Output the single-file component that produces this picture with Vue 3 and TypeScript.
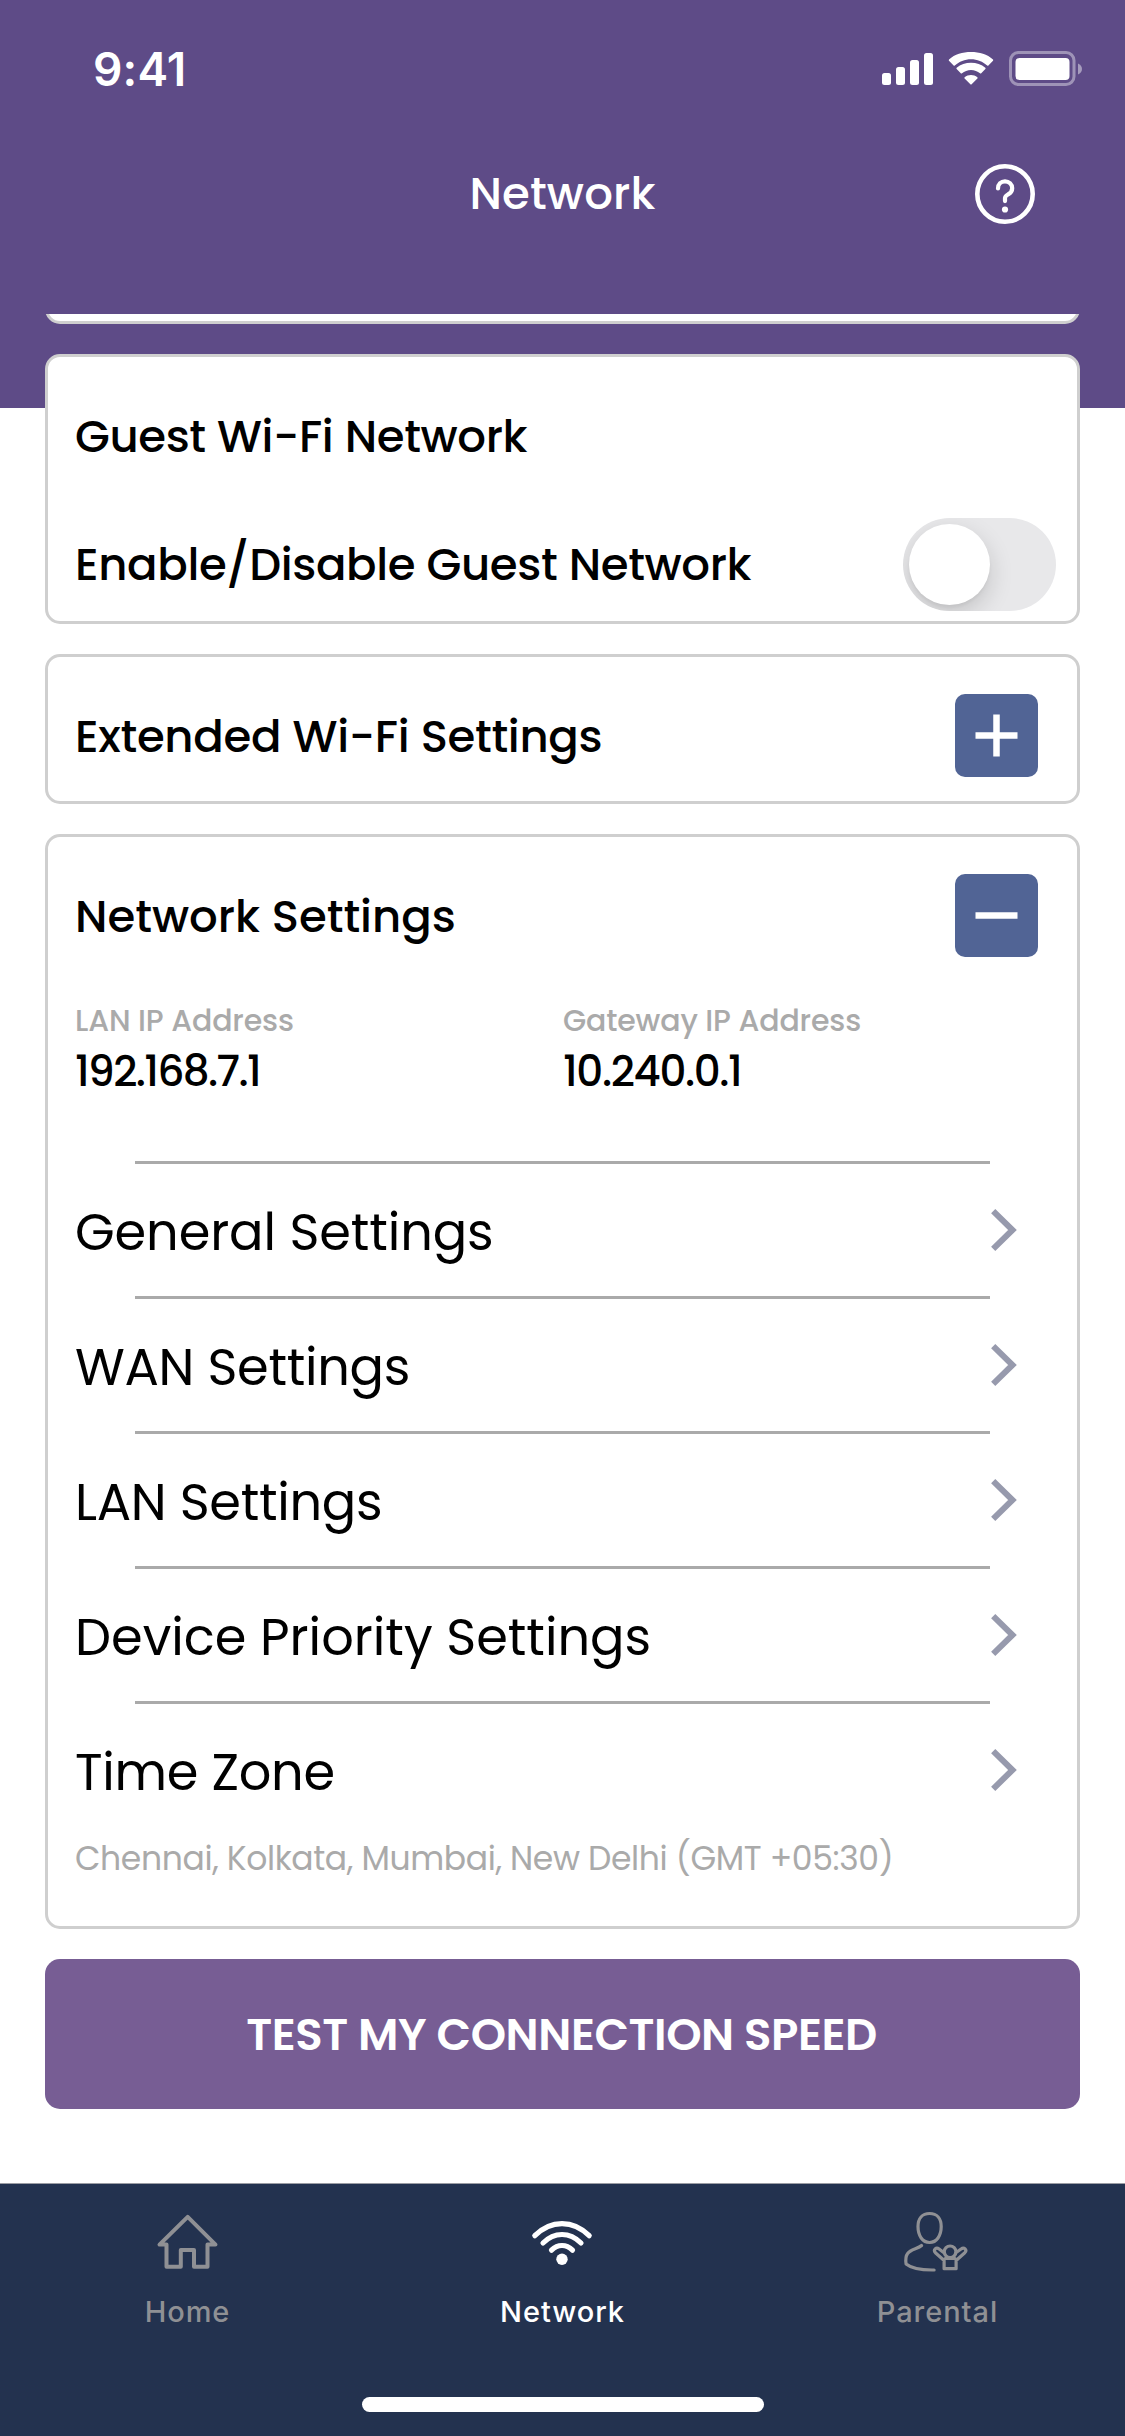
<script setup lang="ts">
import { ref } from 'vue'

interface SettingsRow {
  key: string
  label: string
}

interface Tab {
  key: string
  label: string
}

const rows: SettingsRow[] = [
  { key: 'general', label: 'General Settings' },
  { key: 'wan', label: 'WAN Settings' },
  { key: 'lan', label: 'LAN Settings' },
  { key: 'priority', label: 'Device Priority Settings' },
  { key: 'zone', label: 'Time Zone' },
]

const tabs: Tab[] = [
  { key: 'home', label: 'Home' },
  { key: 'network', label: 'Network' },
  { key: 'parental', label: 'Parental' },
]

const activeTab = ref('network')
const guestEnabled = ref(false)
</script>

<template>
  <div class="screen">
    <header class="header">
      <div class="status">
        <span class="clock">9:41</span>
        <svg class="status-icons" width="202" height="36" viewBox="0 0 202 36">
          <g fill="#fff">
            <rect x="1" y="22" width="9" height="12" rx="2.5" />
            <rect x="15" y="16" width="9" height="18" rx="2.5" />
            <rect x="29" y="9" width="9" height="25" rx="2.5" />
            <rect x="43" y="2" width="9" height="32" rx="2.5" />
            <path d="M90 8.2c6.2 0 11.900 2.400 16.200 6.300.35.32.9.32 1.200 0l4.600-4.700c.35-.36.35-.9 0-1.250C106.200 3.200 98.500 1 90 1S73.800 3.200 68 8.550c-.35.35-.35.9 0 1.250l4.600 4.700c.3.32.85.32 1.200 0C78.100 10.600 83.800 8.200 90 8.200z" />
            <path d="M90 18.900c3.400 0 6.600 1.250 9 3.400.35.33.9.32 1.250-.02l4.100-4.200c.4-.4.4-.95 0-1.300C100.400 13.200 95.400 11.800 90 11.800s-10.400 1.400-14.350 4.980c-.4.35-.4.9 0 1.300l4.100 4.200c.35.340.9.35 1.250.02 2.400-2.150 5.600-3.400 9-3.400z" />
            <path d="M96.400 27.500c.4-.38.38-.96-.03-1.300-1.800-1.450-4-2.300-6.370-2.300s-4.600.85-6.370 2.300c-.4.34-.43.92-.03 1.300l5.750 5.850c.36.36.94.36 1.300 0z" />
            <rect x="134.500" y="7" width="54" height="22" rx="4" />
          </g>
          <rect x="129.500" y="1.500" width="63.500" height="32" rx="8" fill="none" stroke="#fff" stroke-opacity=".4" stroke-width="3" />
          <path d="M197 12.500c2.500 1 4 3.100 4 5.500s-1.500 4.500-4 5.500z" fill="#fff" fill-opacity=".45" />
        </svg>
      </div>
      <div class="titlebar">
        <h1 class="title">Network</h1>
        <svg class="help" width="60" height="60" viewBox="0 0 60 60" fill="none" stroke="#fff" stroke-linecap="round">
          <circle cx="30" cy="30" r="27.700" stroke-width="4.600" />
          <path d="M23 24.500c0-4.200 3-7.200 7-7.200s7.200 3 7.200 7c0 3.200-1.700 4.800-4.100 6.100-2.100 1.200-3.100 1.700-3.100 3.700v3" stroke-width="4.200" />
          <circle cx="30" cy="45.500" r="3.100" fill="#fff" stroke="none" />
        </svg>
      </div>
    </header>

    <main class="content">
      <section class="card card-cut"></section>

      <section class="card card-guest">
        <div class="line"><h2 class="heading guest">Guest Wi-Fi Network</h2></div>
        <div class="line line-toggle">
          <h2 class="heading enable">Enable/Disable Guest Network</h2>
          <button class="toggle" role="switch" :aria-checked="guestEnabled" aria-label="Guest network">
            <span class="knob"></span>
          </button>
        </div>
      </section>

      <section class="card card-extended">
        <h2 class="heading extended">Extended Wi-Fi Settings</h2>
        <button class="square" aria-label="Expand">
          <svg width="83" height="83" viewBox="0 0 83 83" stroke="#fff" stroke-width="6.500">
            <path d="M20.500 41.500h42M41.500 20.500v42" />
          </svg>
        </button>
      </section>

      <section class="card card-network">
        <div class="card-head">
          <h2 class="heading">Network Settings</h2>
          <button class="square" aria-label="Collapse">
            <svg width="83" height="83" viewBox="0 0 83 83" stroke="#fff" stroke-width="6.500">
              <path d="M20.500 41.500h42" />
            </svg>
          </button>
        </div>
        <dl class="addresses">
          <div class="address">
            <dt>LAN IP Address</dt>
            <dd class="lan-value">192.168.7.1</dd>
          </div>
          <div class="address">
            <dt>Gateway IP Address</dt>
            <dd class="gateway-value">10.240.0.1</dd>
          </div>
        </dl>
        <ul class="rows">
          <li v-for="row in rows" :key="row.key" class="row">
            <span class="row-label" :class="`row-${row.key}`">{{ row.label }}</span>
            <svg class="chevron" width="28" height="44" viewBox="0 0 28 44" fill="none" stroke="#979aad" stroke-width="6">
              <path d="M3.200 3.200 22.500 22 3.200 40.800" />
            </svg>
          </li>
        </ul>
        <p class="zone">Chennai, Kolkata, Mumbai, New Delhi (GMT +05:30)</p>
      </section>

      <button class="speed">TEST MY CONNECTION SPEED</button>
    </main>

    <footer class="footer">
      <nav class="tabs">
        <a v-for="tab in tabs" :key="tab.key" class="tab" :class="{ active: tab.key === activeTab }">
          <svg v-if="tab.key === 'home'" class="tab-icon" width="64" height="64" viewBox="0 0 64 64" fill="none" stroke="currentColor" stroke-width="4" stroke-linejoin="round">
            <path d="M31.700 5.800 3.500 33.600h7v22.100h14.300V39H38v16.700h13.500V33.600h8z" />
          </svg>
          <svg v-else-if="tab.key === 'network'" class="tab-icon" width="64" height="64" viewBox="1 0 64 64" fill="none" stroke="currentColor" stroke-width="5.200" stroke-linecap="round">
            <path d="M4.800 24.700C12 17.500 21.500 12.600 32 12.600s20 4.900 27.200 12.100" />
            <path d="M13 32c5.200-5.200 11.800-8.500 19-8.500S45.800 26.800 51 32" />
            <path d="M21.500 39.200c2.900-2.900 6.500-4.700 10.500-4.700s7.600 1.800 10.500 4.700" />
            <circle cx="32" cy="48.200" r="5.700" fill="currentColor" stroke="none" />
          </svg>
          <svg v-else class="tab-icon" width="64" height="64" viewBox="1.9 0 64 64" fill="none" stroke="currentColor" stroke-width="3.200" stroke-linejoin="round" stroke-linecap="round">
            <path d="M25.500 2.500c7.300 0 11.600 5.200 11.600 13.100 0 9.200-4.600 15.900-11.600 15.900s-11.600-6.700-11.600-15.900c0-7.900 4.300-13.100 11.600-13.100z" />
            <path d="M17.500 34.500C14 37.800 6.500 38.300 3.500 42.500 1.600 45 1.400 49 2 53c5.500 4.500 15 6.200 28 6" />
            <path d="M39.500 41.500 35 38c-3-2.300-6.200.9-3.700 3.700L40 49.500v8.200h12v-8.200l8.700-7.800c2.700-2.800-.7-6-3.700-3.700L52 41.500" />
            <circle cx="46" cy="40.800" r="5.800" />
            <path d="M41 47.500h10" />
          </svg>
          <span class="tab-label">{{ tab.label }}</span>
        </a>
      </nav>
      <div class="home-indicator"></div>
    </footer>
  </div>
</template>

<style>
body {
  margin: 0;
}
</style>

<style scoped>
.screen {
  display: flex;
  flex-direction: column;
  width: 1125px;
  height: 2436px;
  overflow: hidden;
  background: #fff;
  color: #000;
  font-family: Poppins, Inter, sans-serif;
}

h1, h2, p, dl, dd, ul {
  margin: 0;
  padding: 0;
}

button {
  padding: 0;
  border: 0;
  font: inherit;
}

svg {
  display: block;
}

.tab-icon {
  overflow: visible;
}

/* Header */
.header {
  flex: none;
  height: 314px;
  background: #5e4b87;
  color: #fff;
}

.status {
  display: flex;
  justify-content: space-between;
  align-items: flex-start;
  height: 134px;
  padding: 0 42px 0 93px;
  box-sizing: border-box;
}

.clock {
  padding-top: 39px;
  font-family: Inter, sans-serif;
  font-size: 46px;
  font-weight: 600;
  line-height: 60px;
  letter-spacing: 0.2px;
}

.status-icons {
  margin-top: 51px;
}

.titlebar {
  display: grid;
  grid-template-columns: 1fr auto 1fr;
  align-items: center;
  height: 120px;
  padding: 0 90px;
}

.title {
  grid-column: 2;
  font-size: 45px;
  font-weight: 500;
  line-height: 60px;
  letter-spacing: 0.15px;
}

.help {
  justify-self: end;
}

/* Scrolling content */
.content {
  display: flex;
  flex-direction: column;
  flex: none;
  gap: 30px;
  height: 1869px;
  padding: 0 45px;
  overflow: hidden;
  box-sizing: border-box;
  background: linear-gradient(#5e4b87 94px, #fff 94px);
}

.card {
  flex: none;
  box-sizing: border-box;
  border: 3px solid #cfcfcf;
  border-radius: 15px;
  background: #fff;
}

.card-cut {
  height: 60px;
  margin-top: -50px;
}

.card-guest {
  height: 270px;
  padding: 48px 21px 0 27px;
}

.line {
  display: flex;
  align-items: center;
  height: 64px;
}

.line-toggle {
  justify-content: space-between;
  height: 93px;
  margin-top: 49px;
}

.heading {
  font-size: 45px;
  font-weight: 500;
  line-height: 60px;
  white-space: nowrap;
}

.guest { letter-spacing: -0.37px; }
.enable { letter-spacing: -0.35px; }
.extended { letter-spacing: -0.3px; }

.toggle {
  display: flex;
  align-items: center;
  width: 153px;
  height: 93px;
  padding: 0 6px;
  overflow: hidden;
  border-radius: 47px;
  background: #e8e8ea;
}

.knob {
  width: 81px;
  height: 81px;
  border-radius: 50%;
  background: #fff;
  box-shadow: 0 9px 24px rgba(0, 0, 0, 0.16), 0 3px 3px rgba(0, 0, 0, 0.04);
}

.card-extended {
  display: flex;
  justify-content: space-between;
  align-items: flex-start;
  height: 150px;
  padding: 37px 39px 0 27px;
}

.card-extended .heading,
.card-head .heading {
  padding-top: 13px;
}

.square {
  width: 83px;
  height: 83px;
  border-radius: 10px;
  background: #516495;
}

.card-network {
  height: 1095px;
}

.card-head {
  display: flex;
  justify-content: space-between;
  align-items: flex-start;
  height: 165px;
  padding: 37px 39px 0 27px;
  box-sizing: border-box;
}

.addresses {
  display: grid;
  grid-template-columns: 488px 1fr;
  height: 159px;
  padding-left: 27px;
}

dt {
  height: 38px;
  color: #aaa;
  font-size: 30px;
  font-weight: 500;
  line-height: 38px;
  letter-spacing: -0.15px;
}

dd {
  font-size: 42px;
  font-weight: 500;
  line-height: 64px;
}

.lan-value { letter-spacing: -1.6px; }
.gateway-value { letter-spacing: -1.35px; }

.rows {
  list-style: none;
}

.row {
  display: flex;
  justify-content: space-between;
  align-items: flex-start;
  height: 135px;
  padding: 0 59px 0 27px;
  box-sizing: border-box;
  background: linear-gradient(#aaa, #aaa) 87px 0 / 855px 3px no-repeat;
}

.row-label {
  padding-top: 41px;
  font-size: 51px;
  line-height: 60px;
  letter-spacing: -0.1px;
}

.row-wan { letter-spacing: -0.3px; }
.row-lan { letter-spacing: -0.3px; }
.row-priority { letter-spacing: 0; }
.row-zone { letter-spacing: -0.3px; }

.chevron {
  margin-top: 47px;
}

.zone {
  margin-top: -7px;
  padding-left: 27px;
  color: #aaa;
  font-size: 33px;
  line-height: 60px;
  letter-spacing: -0.37px;
  white-space: nowrap;
}

.speed {
  flex: none;
  height: 150px;
  padding: 2px 2px 0 0;
  border-radius: 15px;
  background: #775d94;
  color: #fff;
  font-size: 45px;
  font-weight: 600;
  letter-spacing: -0.43px;
}

/* Tab bar */
.footer {
  display: flex;
  flex-direction: column;
  align-items: center;
  flex: none;
  height: 253px;
  border-top: 1px solid #9b9da4;
  box-sizing: border-box;
  background: #23324f;
}

.tabs {
  display: grid;
  grid-template-columns: repeat(3, 1fr);
  width: 100%;
  height: 213px;
}

.tab {
  display: flex;
  flex-direction: column;
  align-items: center;
  padding-top: 27px;
  color: #8f9094;
}

.tab.active {
  color: #fff;
}

.tab-label {
  margin-top: 17px;
  font-family: Inter, sans-serif;
  font-size: 29px;
  font-weight: 500;
  line-height: 40px;
  letter-spacing: 0.950px;
}

.home-indicator {
  width: 402px;
  height: 15px;
  border-radius: 8px;
  background: #fff;
}
</style>
